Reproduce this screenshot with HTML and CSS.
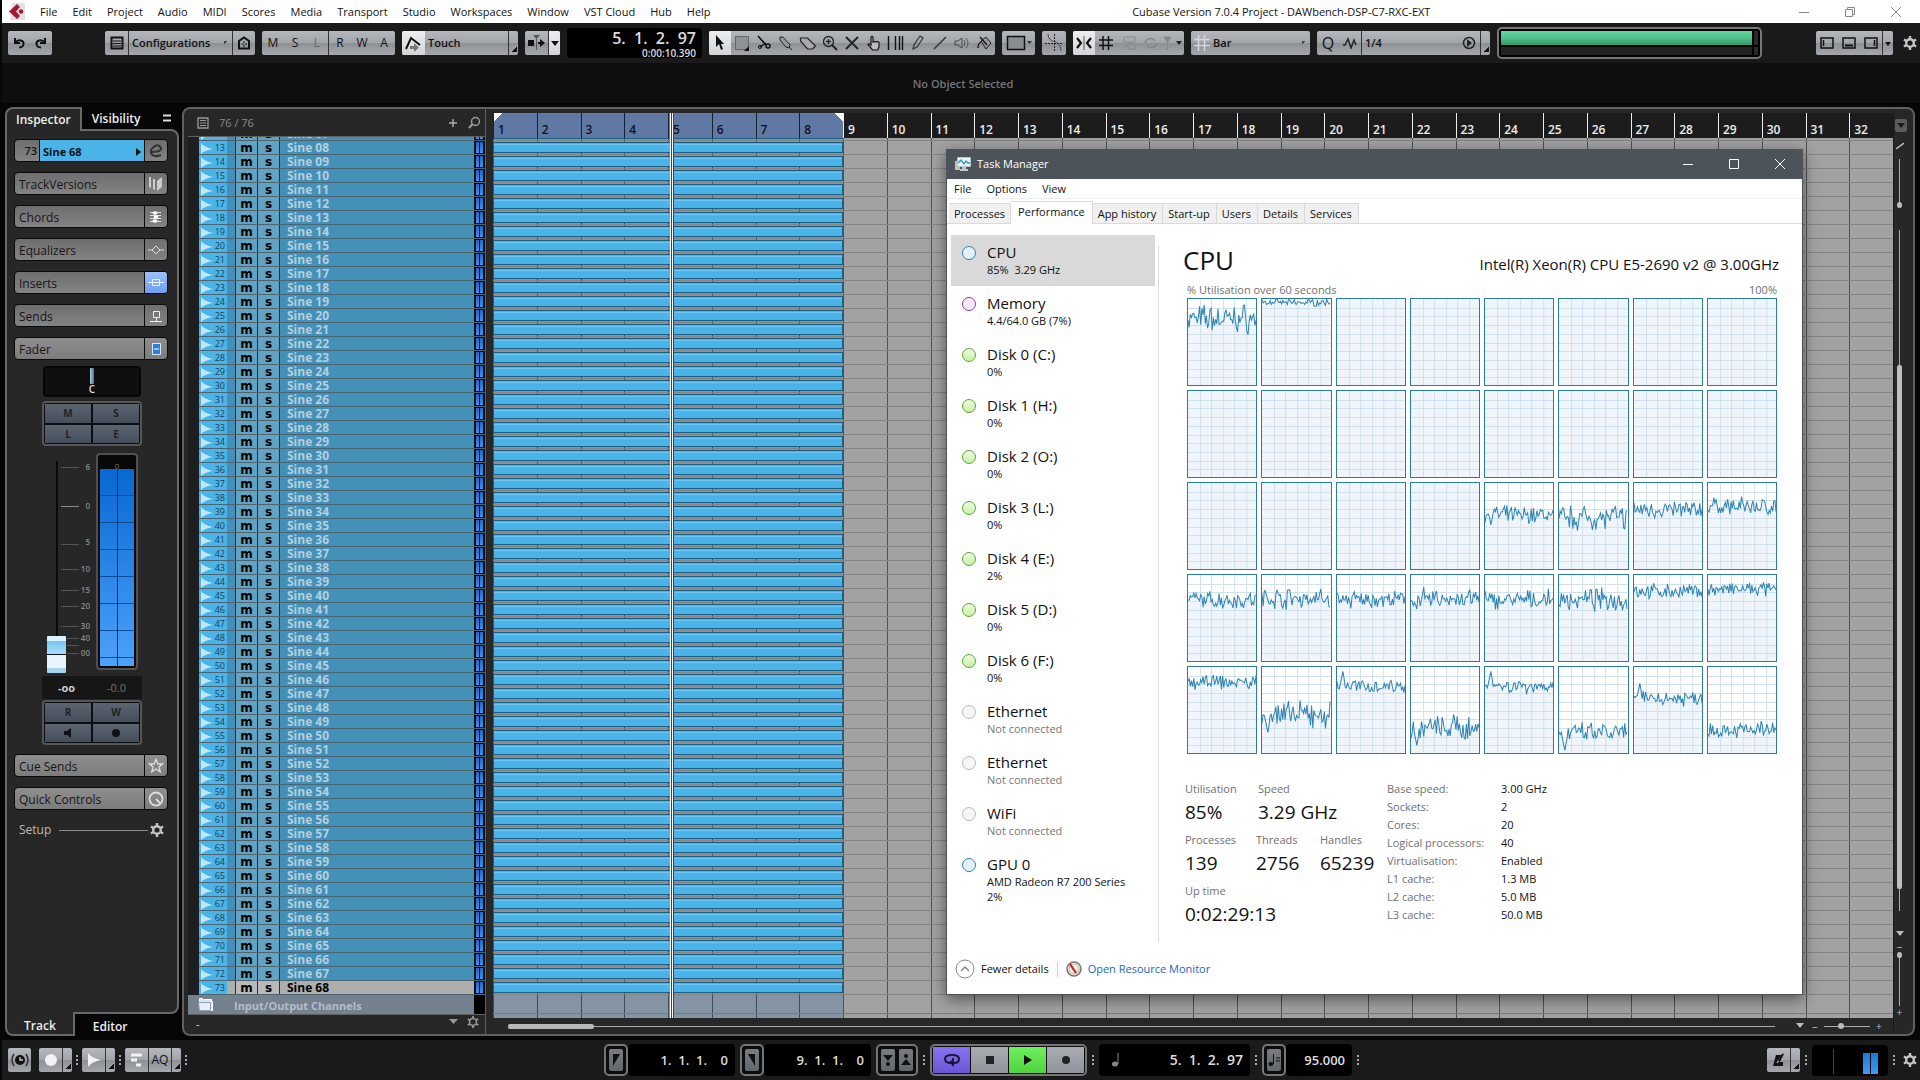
FILE: index.html
```html
<!DOCTYPE html>
<html lang="en">
<head>
  <meta charset="UTF-8" />
  <meta name="viewport" content="width=device-width, initial-scale=1.0"/>
  <title>Cubase Version 7.0.4 Project - DAWbench-DSP-C7-RXC-EXT</title>
  <link rel="stylesheet" href="styles.css">
</head>
<body>
  <header class="menubar">
    <svg class="logo" width="18" height="17" viewBox="0 0 18 17"><path d="M4 0h13v17H2z" fill="#e4dfe0"/><path d="M9 1 12 4 8 8.500l4 4.500-3 3L1 8.500z" fill="#9c1c34"/><circle cx="13" cy="8.500" r="2.200" fill="#9c1c34"/></svg>
    <nav class="menus">
      <button>File</button><button>Edit</button><button>Project</button><button>Audio</button><button>MIDI</button><button>Scores</button><button>Media</button><button>Transport</button><button>Studio</button><button>Workspaces</button><button>Window</button><button>VST Cloud</button><button>Hub</button><button>Help</button>
    </nav>
    <span class="app-title">Cubase Version 7.0.4 Project - DAWbench-DSP-C7-RXC-EXT</span>
    <div class="win-buttons">
      <button aria-label="Minimize"><svg width="12" height="12"><path d="M1 6.500h10" stroke="#888"/></svg></button>
      <button aria-label="Restore"><svg width="12" height="12"><path d="M1.500 3.500h7v7h-7zM3.500 3V1.500h7v7H9" fill="none" stroke="#888"/></svg></button>
      <button aria-label="Close"><svg width="12" height="12"><path d="M1 1l10 10M11 1 1 11" stroke="#888"/></svg></button>
    </div>
  </header>

  <div class="toolbar">
    <div class="group undo">
      <button aria-label="Undo"><svg width="14" height="14"><path d="M3 2v5h5M3.500 6.500C6 3 12 4 11.500 8c-.3 2.500-2 3.500-4.500 3.500" fill="none" stroke="#111" stroke-width="2"/></svg></button>
      <button aria-label="Redo"><svg width="14" height="14"><path d="M11 2v5H6M10.500 6.500C8 3 2 4 2.500 8c.3 2.500 2 3.500 4.500 3.500" fill="none" stroke="#111" stroke-width="2"/></svg></button>
    </div>
    <div class="group config">
      <button aria-label="Workspace list"><svg width="14" height="14"><path d="M1.500 1.500h11v11h-11z" fill="none" stroke="#111" stroke-width="2"/><path d="M3 5h8M3 7.500h8M3 10h8" stroke="#111"/></svg></button>
      <select class="wide" aria-label="Configurations"><option>Configurations</option></select>
      <button class="sep" aria-label="Home"><svg width="14" height="14"><path d="M2 12.500V5l5-3.500L12 5v7.500z" fill="none" stroke="#111" stroke-width="2"/><path d="M7 5v2M7 9v2M4.500 8h2M8 8h2" stroke="#111"/></svg></button>
    </div>
    <div class="group states">
      <button>M</button><button>S</button><button class="dim">L</button><button class="sep">R</button><button>W</button><button>A</button>
    </div>
    <div class="group touch">
      <button class="on" aria-label="Automation"><svg width="17" height="17"><path d="M1 14 6 3l9 7" fill="none" stroke="#111" stroke-width="2"/><path d="M5 11h4V8l5 4.500L9 17v-3H5z" fill="#777"/></svg></button>
      <select class="wide" aria-label="Automation mode"><option>Touch</option></select>
      <button class="corner" aria-label="Automation panel"></button>
    </div>
    <div class="group scroll-mode">
      <button aria-label="Auto-scroll"><svg width="18" height="16"><path d="M0 5h6v6H0z" fill="#111"/><path d="M8.500 1v14" stroke="#555"/><path d="M5 0h7L8.500 4z" fill="#555"/><path d="M10 7h2V4l5 4-5 4V9h-2z" fill="#111"/></svg></button>
      <button class="on sep" aria-label="Auto-scroll options"><svg width="8" height="6"><path d="M0 1h8L4 6z" fill="#111"/></svg></button>
    </div>
    <div class="time-display"><span class="bars">5.&nbsp; 1.&nbsp; 2.&nbsp; 97</span><span class="secs">0:00:10.390</span></div>
    <div class="group tools">
      <button class="on" aria-label="Object selection"><svg width="12" height="18"><path d="M2 1v12l3-3 2 6 2-1-2-5h3z" fill="#111"/></svg></button>
      <button aria-label="Range selection"><svg width="16" height="16"><path d="M1.500 1.500h13v13h-13z" fill="#8f9295" stroke="#666"/><path d="M15 11v5h-5z" fill="#111"/></svg></button>
      <button aria-label="Split"><svg width="16" height="16"><path d="M2 1l8 9M4 12l6-4" stroke="#111" stroke-width="1.500"/><circle cx="12" cy="11" r="2" fill="none" stroke="#111" stroke-width="1.500"/><circle cx="4" cy="12" r="1.500" fill="none" stroke="#111"/></svg></button>
      <button aria-label="Glue"><svg width="16" height="16"><path d="M2 2l3 0 7 8-1 3-3-1-6-7zM11 12l3 3" fill="#999" stroke="#222"/></svg></button>
      <button aria-label="Erase"><svg width="18" height="16"><path d="M1.500 3h7l8 8-3 3h-5l-7-8z" fill="#a9a9a9" stroke="#222" stroke-width="1.200"/></svg></button>
      <button aria-label="Zoom"><svg width="16" height="16"><circle cx="6.500" cy="6.500" r="5" fill="none" stroke="#222" stroke-width="1.300"/><path d="M4 6.500h5M6.500 4v5" stroke="#222" stroke-width="1.300"/><path d="M10 10l5 5" stroke="#222" stroke-width="2"/></svg></button>
      <button aria-label="Mute"><svg width="14" height="14"><path d="M1 1l12 12M13 1 1 13" stroke="#222" stroke-width="1.800"/></svg></button>
      <button aria-label="Comp"><svg width="16" height="16"><path d="M5 10V2q1-1.500 2 0v5q1.500-1 2 0 1.500-1 2 0 1.500-.8 2 .500V12l-1.500 3H6.500L2 9.500q1-1.500 3 .5z" fill="#bbb" stroke="#111" stroke-width="1.200"/></svg></button>
      <button aria-label="Time warp"><svg width="18" height="14"><path d="M1.500 0v14M8.500 0v14M12.500 0v14M15.500 0v14" stroke="#111" stroke-width="1.400"/></svg></button>
      <button aria-label="Draw"><svg width="12" height="16"><path d="M1 14l1-4 6-9 3 2-6 9z" fill="none" stroke="#333" stroke-width="1.200"/></svg></button>
      <button aria-label="Line"><svg width="14" height="14"><path d="M1 13 13 1" stroke="#333" stroke-width="1.500"/></svg></button>
      <button aria-label="Play"><svg width="16" height="14"><path d="M1 5h3l4-3v10L4 9H1z" fill="none" stroke="#444"/><path d="M10 4q2 3 0 6M12 2q4 5 0 10" fill="none" stroke="#555"/></svg></button>
      <button aria-label="Color"><svg width="16" height="16"><path d="M5 6l5-4 5 6-5 6z" fill="#999" stroke="#222"/><path d="M4 2l7 8M5 7c-2 1-3 3-3 6" fill="none" stroke="#111" stroke-width="1.300"/></svg></button>
    </div>
    <div class="group swatch"><button aria-label="Event colors"><svg width="26" height="16"><path d="M1.500 1.500h17v13h-17z" fill="#8a8d90" stroke="#111" stroke-width="1.500"/><path d="M21 6h5l-2.500 3z" fill="#333"/></svg></button></div>
    <div class="group xfade"><button aria-label="Snap to zero crossing"><svg width="18" height="18"><path d="M0 9.500h18M9.500 0v18" stroke="#222" stroke-dasharray="2 1"/><path d="M3 0c1 12 12 3 13 17" fill="none" stroke="#444"/></svg></button></div>
    <div class="group snap">
      <button class="on" aria-label="Snap"><svg width="16" height="14"><path d="M1 2l4 5-4 5M15 2l-4 5 4 5" fill="none" stroke="#111" stroke-width="2.200"/><path d="M8 0v14" stroke="#555"/></svg></button>
      <button aria-label="Grid"><svg width="14" height="14"><path d="M4 0v14M9.500 0v14M0 4h14M0 9.500h14" stroke="#111" stroke-width="1.500"/></svg></button>
      <button aria-label="Grid relative"><svg width="16" height="14"><path d="M3 1h11v5H3zM7 8h7v5H7zM3 10h4" fill="none" stroke="#85888b"/></svg></button>
      <button aria-label="Cycle snap"><svg width="16" height="14"><path d="M2 7q2-6 8-4l2 2M14 7q-2 6-8 4L4 9" fill="none" stroke="#85888b" stroke-width="1.500"/></svg></button>
      <button aria-label="Snap type"><svg width="20" height="14"><path d="M1 1h7L4.500 6zM4.500 5v9" fill="#85888b" stroke="#85888b"/><path d="M13 5h6l-3 4z" fill="#222"/></svg></button>
    </div>
    <div class="group grid-type">
      <svg width="16" height="16"><path d="M4.500 0v16M10.500 0v16M0 4.500h16M0 10.500h16" stroke="#d5d8da" stroke-width="1.500"/></svg>
      <select class="wide" aria-label="Grid type"><option>Bar</option></select>
    </div>
    <div class="group quantize">
      <button class="big">Q</button>
      <button aria-label="Iterative quantize"><svg width="14" height="12"><path d="M0 8h2l3-6 3 9 3-8 2 5" fill="none" stroke="#222" stroke-width="1.500"/></svg></button>
      <select class="wide plain sep" aria-label="Quantize preset"><option>1/4</option></select>
      <button aria-label="Apply quantize"><svg width="14" height="14"><circle cx="7" cy="7" r="5.500" fill="none" stroke="#222" stroke-width="1.500"/><path d="M5 3l5 4-5 4z" fill="#222"/></svg></button>
      <button class="corner" aria-label="Quantize panel"></button>
    </div>
    <div class="perf-meter"><div class="perf-row"><i class="load"></i><i class="peak"></i></div><div class="perf-row"><i class="disk"></i><i class="peak"></i></div></div>
    <div class="group zones">
      <button aria-label="Left zone"><svg width="14" height="14"><path d="M1 2h12v10H1z" fill="none" stroke="#111" stroke-width="1.500"/><path d="M3.500 4v6" stroke="#111" stroke-width="1.500"/></svg></button>
      <button aria-label="Lower zone"><svg width="14" height="14"><path d="M1 2h12v10H1z" fill="none" stroke="#111" stroke-width="1.500"/><path d="M3 9.500h8" stroke="#111" stroke-width="2"/></svg></button>
      <button aria-label="Right zone"><svg width="14" height="14"><path d="M1 2h12v10H1z" fill="none" stroke="#111" stroke-width="1.500"/><path d="M10.500 4v6" stroke="#111" stroke-width="1.500"/></svg></button>
      <button class="sep slim" aria-label="Zones menu"><svg width="6" height="5"><path d="M0 1h6L3 5z" fill="#111"/></svg></button>
    </div>
    <button class="icon-btn" aria-label="Toolbar setup"><svg class="gear" width="14" height="14" viewBox="0 0 14 14"><circle cx="7" cy="7" r="3.800" fill="none" stroke="#c4c4c4" stroke-width="2.400"/><path d="M7 0v3M7 11v3M.9 3.500l2.600 1.500M10.500 9l2.600 1.500M.9 10.500 3.500 9M10.500 5l2.600-1.500" stroke="#c4c4c4" stroke-width="2.400"/></svg></button>
  </div>

  <div class="info-line">No Object Selected</div>

  <main class="project">
    <aside class="inspector">
      <div class="tabs top"><button class="active">Inspector</button><button>Visibility</button><button class="tab-menu" aria-label="Tab menu"><svg width="8" height="8"><path d="M0 1.500h8M0 6.500h8" stroke="#ddd" stroke-width="2"/></svg></button></div>
      <div class="inspector-body">
        <div class="section track-name"><span class="num">73</span><button class="name">Sine 68 <i></i></button><button class="ico" aria-label="Edit channel"><svg width="16" height="16"><path d="M3 9q11 0 10-4-2-4-6-2-5 3-4 7 2 5 10 2" fill="none" stroke="#333" stroke-width="2"/></svg></button></div>
        <div class="section"><button class="name">TrackVersions</button><button class="ico" aria-label="Show TrackVersions"><svg width="16" height="16"><path d="M1 1h2v11l-2-1zM5 3h2v11l-2-1zM9 5l5-4v10l-5 4z" fill="#ccc"/></svg></button></div>
        <div class="section"><button class="name">Chords</button><button class="ico" aria-label="Show Chords"><svg width="14" height="14"><path d="M1 2.500h11M1 5.500h11M1 8.500h11M1 11.500h11" stroke="#ddd"/><ellipse cx="6" cy="3" rx="2.500" ry="1.800" fill="#fff"/><ellipse cx="7" cy="7" rx="2.500" ry="1.800" fill="#fff"/><ellipse cx="6" cy="11" rx="2.500" ry="1.800" fill="#fff"/></svg></button></div>
        <div class="section"><button class="name">Equalizers</button><button class="ico" aria-label="Show Equalizers"><svg width="16" height="12"><path d="M0 6h4l4-4 4 4h4M4 6l4 4 4-4" fill="none" stroke="#ddd"/></svg></button></div>
        <div class="section"><button class="name">Inserts</button><button class="ico lit" aria-label="Show Inserts"><svg width="16" height="12"><path d="M0 5.500h16M4.500 2.500h7v6h-7z" fill="none" stroke="#e8f0ff"/></svg></button></div>
        <div class="section"><button class="name">Sends</button><button class="ico" aria-label="Show Sends"><svg width="14" height="14"><path d="M4.500 2.500h6v6h-6zM7.500 9v3M1 12.500h12" fill="none" stroke="#eee"/></svg></button></div>
        <div class="section open"><button class="name">Fader</button><button class="ico" aria-label="Show Fader"><svg width="14" height="16"><path d="M3.500 2.500h8v11h-8z" fill="#2a7fe0" stroke="#dceaff"/><path d="M5 8h5" stroke="#fff"/></svg></button></div>
        <div class="pan"><i></i>C</div>
        <div class="pads"><button>M</button><button>S</button><button>L</button><button>E</button></div>
        <div class="fader-area">
          <input class="fader" type="range" min="0" max="100" value="0" aria-label="Volume">
          <svg class="scale" width="32" height="212"><g stroke="#555"><path d="M1 6.500h18M1 83.500h18M1 108.500h18M1 129.500h18M1 145.500h18M1 165.500h18M7 177.500h12M7 184.500h12M7 192.500h12"/><path d="M1 45.500h18" stroke="#888"/></g><g class="scale-text"><text x="30" y="9">6</text><text x="30" y="48">0</text><text x="30" y="84">5</text><text x="30" y="111">10</text><text x="30" y="132">15</text><text x="30" y="148">20</text><text x="30" y="168">30</text><text x="30" y="180">40</text><text x="30" y="195">00</text></g></svg>
          <div class="level"><span>0</span><div class="level-bars"></div></div>
        </div>
        <div class="readout"><b>-oo</b><span>-0.0</span></div>
        <div class="pads"><button>R</button><button>W</button><button aria-label="Monitor"><svg width="12" height="12"><path d="M2 4h3l4-3v10L5 8H2z" fill="#111"/></svg></button><button aria-label="Record enable"><svg width="12" height="12"><circle cx="6" cy="6" r="4" fill="#111"/></svg></button></div>
        <div class="section open spaced"><button class="name">Cue Sends</button><button class="ico" aria-label="Show Cue Sends"><svg width="16" height="16"><path d="M8 1.500l2 4.500h4.500l-3.500 3 1.300 5L8 11l-4.300 3L5 9 1.500 6H6z" fill="none" stroke="#ddd" stroke-width="1.300"/></svg></button></div>
        <div class="section open"><button class="name">Quick Controls</button><button class="ico" aria-label="Show Quick Controls"><svg width="16" height="16"><circle cx="8" cy="8" r="6.500" fill="none" stroke="#ddd" stroke-width="1.800"/><path d="M8 8l4 4" stroke="#ddd" stroke-width="1.800"/></svg></button></div>
        <div class="setup"><span>Setup</span><hr><svg class="gear" width="14" height="14" viewBox="0 0 14 14"><circle cx="7" cy="7" r="3.800" fill="none" stroke="#c4c4c4" stroke-width="2.400"/><path d="M7 0v3M7 11v3M.9 3.500l2.600 1.500M10.500 9l2.600 1.500M.9 10.500 3.500 9M10.500 5l2.600-1.500" stroke="#c4c4c4" stroke-width="2.400"/></svg></div>
      </div>
      <div class="tabs bottom"><button class="active">Track</button><button>Editor</button></div>
    </aside>

    <section class="workspace">
      <div class="track-pane">
        <div class="track-head">
          <svg width="12" height="12"><path d="M1 1h10v10H1z" fill="none" stroke="#999" stroke-width="1.300"/><path d="M3 3.500h6M3 6h6M3 8.500h6" stroke="#999"/></svg>
          <span>76 / 76</span>
          <button aria-label="Add track"><svg width="8" height="8"><path d="M4 0v8M0 4h8" stroke="#aaa" stroke-width="1.500"/></svg></button>
          <button aria-label="Find tracks"><svg width="14" height="14"><circle cx="8.500" cy="5.500" r="4" fill="none" stroke="#999" stroke-width="1.500"/><path d="M5.500 8 2 12" stroke="#999" stroke-width="2"/></svg></button>
        </div>
        <div class="track-list" id="trackList"></div>
        <div class="io-row"><span class="folder"><svg width="18" height="15"><path d="M2.500 13.500h13v-9h-1v-2h-8l-1-1h-3z" fill="#dfe6ef" stroke="#fff"/><path d="M1.500 5.500h12v8h-11z" fill="#e9eef6" stroke="#8fa0b4"/></svg></span><b>Input/Output Channels</b><i></i></div>
        <div class="track-foot"><span>-</span><svg width="30" height="14"><path d="M0 3h9l-4.500 5z" fill="#999"/><g transform="translate(18 0)"><circle cx="6" cy="6" r="3.500" fill="none" stroke="#999" stroke-width="1.500"/><path d="M6 0v2.500M6 9.500V12M.8 3l2.200 1.300M9 7.700 11.200 9M.8 9 3 7.700M9 4.300 11.200 3" stroke="#999" stroke-width="1.800"/></g></svg></div>
      </div>

      <div class="arrange">
        <div class="ruler" id="ruler"></div>
        <div class="lanes">
          <div class="bar-lines" id="barLines"></div>
          <div class="lane-rows" id="laneRows"></div>
          <div class="lane-io"></div>
        </div>
        <div class="playhead"></div>
        <div class="h-scroll"><div class="h-track"><i></i></div><svg width="10" height="6"><path d="M0 0h8L4 5z" fill="#bbb"/></svg><span>–</span><input class="h-zoom" type="range" min="0" max="100" value="36" aria-label="Horizontal zoom"><span>+</span></div>
      </div>

      <div class="v-strip">
        <button class="v-menu" aria-label="Ruler menu"><svg width="8" height="5"><path d="M0 0h8L4 5z" fill="#1a1a1a"/></svg></button>
        <svg width="8" height="8"><path d="M0 7 8 1" stroke="#bbb" stroke-width="1.500"/></svg>
        <div class="v-gain"><i></i></div>
        <div class="v-track"><i></i></div>
        <svg class="v-down" width="8" height="5"><path d="M0 0h8L4 5z" fill="#bbb"/></svg>
        <span>–</span>
        <div class="v-zoom"><i></i></div>
        <span>+</span>
      </div>
    </section>
  </main>

  <footer class="transport">
    <div class="left">
      <div class="group"><button class="w22" aria-label="Constrain delay"><svg width="18" height="16"><circle cx="9" cy="8" r="5" fill="#111"/><path d="M9 5v3h3" stroke="#ccc" fill="none" stroke-width="1.300"/><path d="M3 2q-4 6 0 12M15 2q4 6 0 12" fill="none" stroke="#333" stroke-width="1.500"/></svg></button></div>
      <div class="group"><button class="w22" aria-label="Record mode"><svg width="14" height="14"><circle cx="7" cy="7" r="6" fill="#f0f2f8"/></svg></button><button class="corner"  aria-label="Record options"></button></div><i class="dots"></i>
      <div class="group"><button class="w22" aria-label="Audio record mode"><svg width="14" height="14"><path d="M1 0q3 5 13 7Q4 9 1 14z" fill="#f0f2f8"/></svg></button><button class="corner" aria-label="Audio options"></button></div><i class="dots"></i>
      <div class="group"><button class="w22" aria-label="MIDI record mode"><svg width="14" height="14"><path d="M1 2h11M1 7h6M6 12h5" stroke="#f0f2f8" stroke-width="3"/></svg></button><button class="w22 sep aq">AQ</button><button class="corner" aria-label="MIDI options"></button></div><i class="dots"></i>
    </div>
    <div class="center">
      <div class="frame"><button class="mini" aria-label="Left locator"><svg width="10" height="16"><path d="M2 14V2h7z" fill="#111"/></svg></button></div>
      <div class="field w107">1.&nbsp; 1.&nbsp; 1. &nbsp;&nbsp; 0</div>
      <div class="frame"><button class="mini" aria-label="Right locator"><svg width="10" height="16"><path d="M8 14V2H1z" fill="#111"/></svg></button></div>
      <div class="field w107">9.&nbsp; 1.&nbsp; 1. &nbsp;&nbsp; 0</div>
      <div class="frame"><button class="mini" aria-label="Punch in"><svg width="10" height="16"><path d="M0 3h10L5 9z" fill="#111"/><circle cx="5" cy="12" r="2" fill="#111"/></svg></button><button class="mini" aria-label="Punch out"><svg width="10" height="16"><path d="M0 13h10L5 7z" fill="#111"/><circle cx="5" cy="4" r="2" fill="#111"/></svg></button></div>
      <i class="dots"></i>
      <div class="frame play">
        <button class="cycle" aria-label="Cycle"><svg width="18" height="14"><path d="M8 10q-6 0-6-4t7-4 7 4-5 4" fill="none" stroke="#1b1740" stroke-width="2"/><path d="M6 9l5-3v8z" fill="#1b1740"/><path d="M10 5v8" stroke="#1b1740" stroke-width="2"/></svg></button>
        <button aria-label="Stop"><svg width="10" height="10"><path d="M1 1h8v8H1z" fill="#222"/></svg></button>
        <button class="go" aria-label="Play"><svg width="10" height="12"><path d="M1 1l8 5-8 5z" fill="#111"/></svg></button>
        <button aria-label="Record"><svg width="10" height="10"><circle cx="5" cy="5" r="4" fill="#222"/></svg></button>
      </div>
      <i class="dots"></i>
      <div class="field w151"><svg width="10" height="16"><ellipse cx="4" cy="12" rx="3" ry="2.500" fill="#888"/><path d="M7 12V1" stroke="#888"/></svg><span>5.&nbsp; 1.&nbsp; 2.&nbsp; 97</span></div>
      <i class="dots"></i>
      <div class="frame"><button class="mini" aria-label="Tempo mode"><svg width="12" height="16"><ellipse cx="3" cy="12" rx="2.500" ry="2" fill="#111"/><path d="M5.500 12V2M8 6h4M8 9h4" stroke="#111"/></svg></button></div>
      <div class="field w66">95.000</div>
      <i class="dots"></i>
    </div>
    <div class="right">
      <div class="group"><button class="w22" aria-label="Metronome"><svg width="14" height="16"><path d="M1 14 4 3h5l-1 7h3v4z" fill="#111"/><path d="M5 11 12 1" stroke="#999" stroke-width="1.500"/><path d="M7 9 11 2" stroke="#111" stroke-width="2"/></svg></button><button class="corner" aria-label="Metronome setup"></button></div><i class="dots"></i>
      <div class="out-level"><i class="line"></i><i class="bar"></i><i class="bar"></i></div><i class="dots"></i>
      <button class="icon-btn" aria-label="Transport setup"><svg class="gear" width="14" height="14" viewBox="0 0 14 14"><circle cx="7" cy="7" r="3.800" fill="none" stroke="#c4c4c4" stroke-width="2.400"/><path d="M7 0v3M7 11v3M.9 3.500l2.600 1.500M10.500 9l2.600 1.500M.9 10.500 3.500 9M10.500 5l2.600-1.500" stroke="#c4c4c4" stroke-width="2.400"/></svg></button>
    </div>
  </footer>

  <div class="taskmgr">
    <div class="tm-title">
      <svg width="18" height="16"><path d="M1 5h5v9H1z" fill="#c9c2a8"/><path d="M3.500 1.500h13v9h-13z" fill="#e8f6fc" stroke="#b9c4c8"/><path d="M4 7l3-3 3 4 2-3 2 2h2" fill="none" stroke="#2b8fc0" stroke-width="1.300"/><path d="M8 11h4v2h2v2H6v-2h2z" fill="#c4c9cb"/></svg>
      <span>Task Manager</span>
      <button aria-label="Minimise"><svg width="12" height="12"><path d="M1 6.500h10" stroke="#fff"/></svg></button>
      <button aria-label="Maximise"><svg width="12" height="12"><path d="M1.500 1.500h9v9h-9z" fill="none" stroke="#fff"/></svg></button>
      <button aria-label="Close Task Manager"><svg width="12" height="12"><path d="M1 1l10 10M11 1 1 11" stroke="#fff"/></svg></button>
    </div>
    <div class="tm-menu"><button>File</button><button>Options</button><button>View</button></div>
    <div class="tm-tabs"><button>Processes</button><button class="active">Performance</button><button>App history</button><button>Start-up</button><button>Users</button><button>Details</button><button>Services</button></div>
    <div class="tm-content">
      <div class="tm-side">
        <button class="item selected"><i class="dot blue"></i><span class="t">CPU</span><span>85%&nbsp; 3.29 GHz</span></button>
        <button class="item"><i class="dot purple"></i><span class="t">Memory</span><span>4.4/64.0 GB (7%)</span></button>
        <button class="item"><i class="dot green"></i><span class="t">Disk 0 (C:)</span><span>0%</span></button>
        <button class="item"><i class="dot green"></i><span class="t">Disk 1 (H:)</span><span>0%</span></button>
        <button class="item"><i class="dot green"></i><span class="t">Disk 2 (O:)</span><span>0%</span></button>
        <button class="item"><i class="dot green"></i><span class="t">Disk 3 (L:)</span><span>0%</span></button>
        <button class="item"><i class="dot green"></i><span class="t">Disk 4 (E:)</span><span>2%</span></button>
        <button class="item"><i class="dot green"></i><span class="t">Disk 5 (D:)</span><span>0%</span></button>
        <button class="item"><i class="dot green"></i><span class="t">Disk 6 (F:)</span><span>0%</span></button>
        <button class="item off"><i class="dot"></i><span class="t">Ethernet</span><span>Not connected</span></button>
        <button class="item off"><i class="dot"></i><span class="t">Ethernet</span><span>Not connected</span></button>
        <button class="item off"><i class="dot"></i><span class="t">WiFi</span><span>Not connected</span></button>
        <button class="item"><i class="dot blue"></i><span class="t">GPU 0</span><span>AMD Radeon R7 200 Series<br>2%</span></button>
      </div>
      <div class="tm-detail">
        <div class="cpu-head"><h1>CPU</h1><span>Intel(R) Xeon(R) CPU E5-2690 v2 @ 3.00GHz</span></div>
        <div class="cpu-cap"><span>% Utilisation over 60 seconds</span><span>100%</span></div>
        <div class="cores" id="cores"></div>
        <div class="stats">
          <div class="stats-big">
            <div><span>Utilisation</span><b>85%</b></div><div class="span2"><span>Speed</span><b>3.29 GHz</b></div>
            <div><span>Processes</span><b>139</b></div><div><span>Threads</span><b>2756</b></div><div><span>Handles</span><b>65239</b></div>
            <div class="span3"><span>Up time</span><b>0:02:29:13</b></div>
          </div>
          <table class="stats-table">
            <tr><th>Base speed:</th><td>3.00 GHz</td></tr>
            <tr><th>Sockets:</th><td>2</td></tr>
            <tr><th>Cores:</th><td>20</td></tr>
            <tr><th>Logical processors:</th><td>40</td></tr>
            <tr><th>Virtualisation:</th><td>Enabled</td></tr>
            <tr><th>L1 cache:</th><td>1.3 MB</td></tr>
            <tr><th>L2 cache:</th><td>5.0 MB</td></tr>
            <tr><th>L3 cache:</th><td>50.0 MB</td></tr>
          </table>
        </div>
      </div>
    </div>
    <div class="tm-foot">
      <button><svg width="20" height="20"><circle cx="10" cy="10" r="9" fill="#fff" stroke="#888"/><path d="M6 12l4-4 4 4" fill="none" stroke="#888" stroke-width="1.500"/></svg>Fewer details</button>
      <i></i>
      <svg width="16" height="16"><circle cx="8" cy="8" r="7" fill="#f4efe6" stroke="#777" stroke-width="1.500"/><circle cx="8" cy="8" r="5" fill="none" stroke="#b9b2a4"/><path d="M4 3l6 9" stroke="#c22" stroke-width="2.200"/></svg>
      <a href="#">Open Resource Monitor</a>
    </div>
  </div>

  <script src="script.js"></script>
</body>
</html>
```
FILE: styles.css
```css
* {
  box-sizing: border-box;
}
body {
  margin: 0;
  height: 100vh;
  padding-left: 2px;
  display: flex;
  flex-direction: column;
  overflow: hidden;
  background: #060606;
  color: #ddd;
  font-family: "Open Sans", "Noto Sans", sans-serif;
  font-size: 11px;
  line-height: 16px;
}
button, select, input {
  font: inherit;
  color: inherit;
  margin: 0;
  padding: 0;
  border: 0;
  border-radius: 0;
  background: none;
}
button {
  display: flex;
  align-items: center;
  justify-content: center;
}
select {
  appearance: none;
}
svg {
  display: block;
  flex: none;
}

/* menu bar */
.menubar {
  display: flex;
  align-items: center;
  height: 23px;
  flex: none;
  padding: 0 18px 0 6px;
  background: #fff;
  color: #111;
}
.menus {
  display: flex;
  gap: 15px;
  margin-left: 14px;
}
.app-title {
  flex: 1;
  text-align: center;
  padding-left: 54px;
}
.win-buttons {
  display: flex;
  gap: 34px;
}

/* toolbar */
.toolbar {
  display: flex;
  align-items: center;
  gap: 7px;
  height: 40px;
  flex: none;
  padding: 0 0 0 6px;
  background: #1a1a1a;
}
.group {
  display: flex;
  align-items: center;
  height: 24px;
  border-radius: 2px;
  overflow: hidden;
  background: linear-gradient(#b4b8bc, #a2a6aa 48%, #8e9296 52%, #a4a7ab);
  color: #111;
}
.group button {
  flex: 1;
  align-self: stretch;
}
.group .on {
  background: linear-gradient(#eceef0, #d2d4d6);
}
.group .sep {
  border-left: 1px solid #333;
}
.group .corner {
  flex: none;
  width: 10px;
  border-left: 1px solid #333;
  background: linear-gradient(135deg, transparent 50%, #111 50%) no-repeat 2px 16px / 6px 5px;
}
.wide {
  flex: 1;
  align-self: stretch;
  min-width: 0;
  padding-left: 3px;
  font-weight: 600;
  background: linear-gradient(to bottom right, #444 50%, transparent 50%) no-repeat right 4px center / 4px 4px;
}
.undo {
  width: 44px;
  margin-right: 46px;
}
.config {
  width: 150px;
}
.config button, .touch .on {
  flex: none;
  width: 23px;
}
.config .wide {
  border-left: 1px solid #333;
}
.states {
  width: 133px;
  font-size: 12px;
}
.dim {
  color: #666;
}
.touch {
  width: 116px;
}
.touch .wide, .plain {
  background: none;
}
.scroll-mode {
  width: 35px;
}
.scroll-mode .sep {
  flex: none;
  width: 12px;
}
.time-display {
  width: 135px;
  height: 30px;
  padding-right: 6px;
  border-radius: 3px;
  background: #000;
  text-align: right;
  display: flex;
  flex-direction: column;
  font-weight: 600;
}
.bars {
  font-size: 16px;
  line-height: 20px;
}
.secs {
  font-size: 10px;
  line-height: 10px;
}
.tools {
  width: 286px;
}
.swatch {
  width: 33px;
}
.xfade {
  width: 24px;
}
.snap {
  width: 111px;
}
.grid-type {
  width: 119px;
  padding-left: 3px;
}
.quantize {
  width: 173px;
}
.quantize button:not(.corner) {
  flex: none;
  width: 22px;
}
.big {
  font-size: 16px;
}
.perf-meter {
  width: 265px;
  height: 32px;
  padding: 2px;
  margin-right: auto;
  border: 2px solid #777;
  border-radius: 5px;
  background: #000;
}
.perf-row {
  display: flex;
  gap: 2px;
  height: 14px;
  margin-bottom: 2px;
}
.perf-row:last-child {
  height: 8px;
}
.load {
  flex: 1;
  background: linear-gradient(#62d6a0, #4fc08c 50%, #34996b);
}
.disk {
  flex: 1;
  background: #222;
}
.peak {
  width: 4px;
  background: #2a2a2a;
}
.zones {
  width: 77px;
}
.zones .slim {
  flex: none;
  width: 11px;
}
.icon-btn {
  width: 20px;
  height: 20px;
}

.info-line {
  height: 40px;
  flex: none;
  background: #0e0e0e;
  color: #757575;
  text-align: center;
  line-height: 42px;
  font-weight: 600;
  padding-left: 4px;
}

/* project window */
.project {
  flex: 1;
  min-height: 0;
  display: flex;
  gap: 3px;
  padding: 4px 5px 4px 3px;
}
.inspector {
  width: 174px;
  flex: none;
  display: flex;
  flex-direction: column;
}
.tabs {
  display: flex;
  align-items: stretch;
  height: 22px;
  flex: none;
  color: #eee;
  font-weight: 600;
  font-size: 12px;
}
.tabs button {
  padding: 2px 10px 0;
}
.tabs .active {
  position: relative;
  z-index: 1;
  border: 2px solid #686868;
  background: #272727;
}
.tabs.top .active {
  border-bottom: 0;
  border-radius: 8px 0 0 0;
  margin-bottom: -2px;
  padding: 0 9px;
}
.tabs.bottom .active {
  border-top: 0;
  border-radius: 0 0 0 8px;
  margin-top: -2px;
  padding: 5px 17px 0;
}
.tabs.bottom button {
  padding: 3px 18px 0;
}
.tabs .tab-menu {
  margin-left: auto;
  padding: 0 8px;
}
.inspector-body {
  flex: 1;
  border: 2px solid #686868;
  border-radius: 0 8px 8px 0;
  background: #272727;
  padding: 8px 7px;
}
.section {
  display: flex;
  width: 154px;
  height: 23px;
  margin-bottom: 10px;
  border: 1px solid #0a0a0a;
  border-radius: 4px;
  background: linear-gradient(#6e6e6e, #838383);
  color: #161616;
  overflow: hidden;
}
.section.open {
  background: linear-gradient(#8e8e8e, #7c7c7c);
}
.section .name {
  flex: 1;
  justify-content: flex-start;
  padding: 2px 0 0 4px;
  font-size: 12px;
}
.section .ico {
  width: 23px;
  border-left: 1px solid #0a0a0a;
}
.section .lit {
  background: linear-gradient(#9cc0fa, #6b9ff0);
}
.num {
  width: 24px;
  padding-right: 2px;
  text-align: right;
  line-height: 21px;
  font-weight: 600;
}
.section.track-name .name {
  justify-content: space-between;
  padding: 2px 3px 0 3px;
  background: #4ab4e8;
  border-left: 1px solid #0a0a0a;
  color: #08131a;
  font-size: 11px;
  font-weight: 700;
}
.track-name i {
  border: 4px solid transparent;
  border-left: 5px solid #111;
  border-right: 0;
}
.pan {
  width: 98px;
  height: 31px;
  margin: -4px auto 4px;
  border: 2px solid #060606;
  border-radius: 4px;
  background: #0f0f0f;
  text-align: center;
  font-size: 10px;
  font-weight: 600;
  line-height: 10px;
}
.pan i {
  display: block;
  width: 4px;
  height: 16px;
  margin: 0 auto;
  border-radius: 1px;
  background: linear-gradient(90deg, #9fd0e0, #4c7484);
}
.pads {
  display: grid;
  grid-template-columns: 1fr 1fr;
  grid-template-rows: 1fr 1fr;
  gap: 2px;
  width: 100px;
  height: 45px;
  margin: 0 auto;
  padding: 1px;
  border: 2px solid #575757;
  border-radius: 4px;
  background: #0b0f14;
}
.pads button {
  background: linear-gradient(#5c6470, #454e5b);
  color: #20242a;
  font-size: 10px;
  font-weight: 700;
}
.fader-area {
  display: flex;
  height: 218px;
  margin: 7px 0 5px 32px;
}
.fader {
  position: relative;
  z-index: 1;
  appearance: none;
  writing-mode: vertical-lr;
  direction: rtl;
  width: 21px;
  height: 212px;
  margin-top: 8px;
  background: linear-gradient(#0a0a0a, #0a0a0a) no-repeat center / 2px 100%;
}
.fader::-webkit-slider-thumb {
  appearance: none;
  width: 19px;
  height: 37px;
  border-radius: 1px;
  background: linear-gradient(#dff2ff 0, #dff2ff 5px, #76c4f4 5px, #a9dcfa 18px, #111 18px, #111 19px, #e6f5ff 19px, #e6f5ff 32px, #a6d4ee 32px);
}
.scale {
  margin: 8px 0 0 -7px;
}
.scale-text {
  fill: #8a8a8a;
  stroke: none;
  text-anchor: end;
  font-size: 8px;
  font-weight: 600;
}
.level {
  width: 42px;
  height: 217px;
  margin-left: 4px;
  padding: 2px;
  border: 2px solid #505050;
  border-radius: 4px;
  background: #080808;
}
.level span {
  display: block;
  height: 12px;
  text-align: center;
  font-size: 8px;
  line-height: 18px;
  color: #777;
}
.level-bars {
  height: 197px;
  background:
    linear-gradient(#08305c, #08305c) no-repeat center / 1px 100%,
    repeating-linear-gradient(transparent 0 26px, #0b4c96 26px 27px),
    linear-gradient(#0668d2, #4ba2fb);
}
.readout {
  display: flex;
  justify-content: space-around;
  width: 100px;
  height: 23px;
  margin: 0 auto 1px;
  background: #161616;
  line-height: 23px;
  color: #707070;
}
.readout b {
  color: #ccc;
}
.spaced {
  margin-top: 9px;
}
.setup {
  display: flex;
  align-items: center;
  gap: 8px;
  padding: 2px 6px 0 5px;
  color: #bbb;
  font-size: 12px;
}
.setup hr {
  flex: 1;
  margin: 0 -6px 0 0;
  border: 0;
  border-top: 1px solid #888;
}

.workspace {
  flex: 1;
  min-width: 0;
  display: flex;
  border: 2px solid #606060;
  border-radius: 8px;
  background: #272727;
  overflow: hidden;
}
.track-pane {
  width: 302px;
  flex: none;
  display: flex;
  flex-direction: column;
  border-right: 1px solid #606060;
  padding-left: 4px;
}
.track-head {
  display: flex;
  align-items: center;
  gap: 10px;
  height: 28px;
  flex: none;
  padding: 0 4px 0 9px;
  border-bottom: 1px solid #606060;
  color: #8a8a8a;
}
.track-head span {
  margin-right: auto;
}
.track-list {
  flex: 1;
  min-height: 0;
  display: flex;
  flex-direction: column;
  justify-content: flex-end;
  overflow: hidden;
  background: #1c1e20;
}
.track {
  display: flex;
  flex: none;
  height: 14px;
  margin-left: 11px;
  line-height: 14px;
  border-bottom: 1px solid #4b6470;
  background: #4391b8;
  color: #b3cfdf;
  font-weight: 700;
  font-size: 12px;
}
.track .idx {
  width: 28px;
  display: flex;
  align-items: center;
  justify-content: space-between;
  padding: 0 2px;
  margin-right: 8px;
  background: #4ab4e8;
  color: #15435c;
  font-weight: 400;
  font-size: 9px;
}
.track button {
  width: 22px;
  border-left: 1px solid #1c3440;
  background: #62a2c2;
  color: #000;
  font-family: "DejaVu Sans", sans-serif;
  font-weight: 700;
  font-size: 12px;
  line-height: 10px;
}
.track .title {
  flex: 1;
  border-left: 1px solid #1c3440;
  padding-left: 7px;
}
.track .sig {
  width: 11px;
  padding: 1px 2px;
  background: #0a0d14;
  display: flex;
  gap: 1px;
}
.track .sig i {
  flex: 1;
  background: linear-gradient(#1d66c4, #3f92ee);
}
.track.selected {
  background: #aeaeae;
  color: #000;
}
.track.selected button {
  background: #b9b9b9;
}
.io-row {
  display: flex;
  align-items: center;
  height: 19px;
  flex: none;
  background: #74828f;
  color: #b4bec8;
}
.io-row .folder {
  width: 28px;
  padding-left: 9px;
}
.io-row b {
  margin-left: 18px;
  padding-top: 2px;
  font-weight: 700;
}
.io-row i {
  margin-left: auto;
  width: 11px;
  height: 19px;
  background: #000;
}
.track-foot {
  display: flex;
  justify-content: space-between;
  align-items: flex-start;
  height: 20px;
  flex: none;
  padding: 1px 6px 0 8px;
  border-top: 1px solid #606060;
}

/* arrangement */
.arrange {
  position: relative;
  flex: 1;
  min-width: 0;
  margin-left: 7px;
  display: flex;
  flex-direction: column;
}
.ruler {
  display: grid;
  grid-template-columns: repeat(32, 1fr);
  height: 25px;
  margin-top: 4px;
  flex: none;
  background: #1c1c1c;
  font-weight: 600;
  font-size: 12px;
  color: #eee;
}
.ruler span {
  border-left: 1px solid #eee;
  padding: 9px 0 0 4px;
}
.ruler .loop {
  background: #6079a4;
  border-left-color: #16202e;
  color: #0d131c;
}
.ruler .first {
  background: linear-gradient(135deg, #fff 6px, #6079a4 6px);
}
.ruler .last {
  background: linear-gradient(225deg, #fff 6px, #6079a4 6px);
}
.lanes {
  position: relative;
  flex: 1;
  min-height: 0;
  display: flex;
  flex-direction: column;
  background: #a2a2a2;
}
.bar-lines {
  position: absolute;
  inset: 0;
  display: grid;
  grid-template-columns: repeat(32, 1fr);
}
.bar-lines i {
  border-left: 1px solid #505050;
}
.bar-lines .loop {
  background: #8594a2;
  border-left-color: #3f4a55;
}
.lane-rows {
  position: relative;
  flex: 1;
  min-height: 0;
  display: flex;
  flex-direction: column;
  justify-content: flex-end;
  overflow: hidden;
}
.lane {
  height: 14px;
  flex: none;
  padding-top: 1px;
  border-bottom: 1px solid #858585;
}
.clip {
  width: 25%;
  height: 11px;
  border: 1px solid #1d5f84;
  background: linear-gradient(#4ab4e8 1px, #6cc6f2 1px, #6cc6f2 2px, #4ab4e8 2px);
}
.lane-io {
  position: relative;
  height: 19px;
  margin-bottom: 4px;
  border-bottom: 1px solid #757b80;
}
.playhead {
  position: absolute;
  left: 177px;
  top: 4px;
  bottom: 16px;
  width: 4px;
  background: linear-gradient(90deg, #fff 1px, #444 1px, #444 2px, #fff 2px, #fff 3px, #444 3px);
}
.h-scroll {
  display: flex;
  align-items: center;
  gap: 6px;
  height: 16px;
  flex: none;
  padding: 0 11px 0 15px;
  color: #bbb;
}
.h-track {
  flex: 1;
  height: 1px;
  margin-right: 15px;
  background: #aaa;
}
.h-track i {
  display: block;
  width: 86px;
  height: 5px;
  margin-top: -2px;
  border-radius: 2px;
  background: #b8b8b8;
}
.h-zoom {
  appearance: none;
  width: 46px;
  height: 8px;
  background: linear-gradient(#aaa, #aaa) no-repeat center / 100% 1px;
}
.h-zoom::-webkit-slider-thumb {
  appearance: none;
  width: 6px;
  height: 6px;
  border-radius: 3px;
  background: #bbb;
}
.v-strip {
  width: 20px;
  flex: none;
  display: flex;
  flex-direction: column;
  align-items: center;
  padding: 10px 8px 16px 0;
  border-left: 1px solid #1a1a1a;
  color: #bbb;
  line-height: 12px;
}
.v-menu {
  width: 12px;
  height: 13px;
  flex: none;
  align-self: flex-end;
  margin: 0 -2px 10px 0;
  border-radius: 2px;
  background: #5c5c60;
}
.v-gain {
  width: 1px;
  height: 49px;
  flex: none;
  margin: 9px 0 22px;
  background: #aaa;
  display: flex;
  align-items: flex-end;
}
.v-gain i, .v-zoom i {
  flex: none;
  width: 5px;
  height: 6px;
  margin-left: -2px;
  border-radius: 3px;
  background: #bbb;
}
.v-track {
  flex: 1;
  width: 1px;
  background: #aaa;
  margin-bottom: 20px;
}
.v-track i {
  display: block;
  width: 5px;
  height: 77%;
  margin: 135px 0 0 -2px;
  border-radius: 2px;
  background: #c0c0c0;
}
.v-down {
  margin-bottom: 4px;
}
.v-zoom {
  width: 1px;
  height: 54px;
  flex: none;
  background: #aaa;
}
.v-zoom i {
  display: block;
}

/* transport */
.transport {
  display: flex;
  align-items: center;
  height: 40px;
  flex: none;
  padding: 0 0 0 6px;
  background: #1a1a1a;
}
.left, .center, .right {
  display: flex;
  align-items: center;
  gap: 5px;
}
.left {
  width: 596px;
  gap: 4px;
}
.left .group:first-child {
  margin-right: 4px;
}
.right {
  margin-left: auto;
}
.group .w22 {
  flex: none;
  width: 23px;
}
.aq {
  font-size: 12px;
}
.dots {
  width: 2px;
  height: 10px;
  background: repeating-linear-gradient(#aaa 0 2px, transparent 2px 4px);
}
.frame {
  display: flex;
  gap: 4px;
  height: 32px;
  padding: 3px;
  border: 2px solid #757575;
  border-radius: 5px;
  background: #0c0c0c;
}
.mini {
  width: 14px;
  border-radius: 2px;
  background: linear-gradient(#787d82, #62676c);
}
.field {
  display: flex;
  align-items: center;
  justify-content: flex-end;
  height: 32px;
  padding-right: 7px;
  border-radius: 4px;
  background: #000;
  font-size: 13px;
  font-weight: 600;
}
.frame + .field {
  margin-left: -5px;
}
.field svg {
  margin: 0 auto 0 12px;
}
.w107 {
  width: 107px;
}
.w151 {
  width: 151px;
  font-size: 14px;
}
.w66 {
  width: 66px;
}
.play {
  gap: 1px;
  padding: 1px;
}
.play button {
  width: 37px;
  background: linear-gradient(#a9adb3, #90949a);
}
.play .cycle {
  background: linear-gradient(#8472ee, #6a58d6);
}
.play .go {
  background: linear-gradient(#6ef05e, #4fd33e);
}
.out-level {
  display: flex;
  align-items: flex-end;
  gap: 1px;
  width: 76px;
  height: 31px;
  padding: 3px 10px 2px 21px;
  border-radius: 4px;
  background: #000;
}
.out-level .line {
  width: 1px;
  height: 25px;
  margin-right: auto;
  background: #444;
}
.out-level .bar {
  width: 7px;
  height: 21px;
  background: linear-gradient(#1c78d8, #409af4);
}

/* task manager window */
.taskmgr {
  position: absolute;
  left: 946px;
  top: 149px;
  width: 857px;
  display: flex;
  flex-direction: column;
  border: 1px solid #4c5459;
  border-top: 0;
  background: #fff;
  color: #111;
  box-shadow: 0 4px 14px rgba(0, 0, 0, 0.5);
}
.tm-title {
  display: flex;
  align-items: center;
  gap: 34px;
  height: 30px;
  padding: 0 16px 0 7px;
  background: #4c5459;
  color: #fff;
}
.tm-title span {
  margin: 0 auto 0 -29px;
}
.tm-menu {
  display: flex;
  gap: 15px;
  height: 20px;
  padding-left: 7px;
  border-bottom: 1px solid #eee;
}
.tm-tabs {
  display: flex;
  align-items: flex-end;
  height: 25px;
  padding-left: 2px;
  border-bottom: 1px solid #d9d9d9;
}
.tm-tabs button {
  height: 20px;
  padding: 0 6px 0 5px;
  border: 1px solid #d9d9d9;
  border-width: 1px 1px 0 0;
  background: #f0f0f0;
}
.tm-tabs button:first-child {
  padding: 0 5px;
}
.tm-tabs .active {
  height: 23px;
  padding: 0 7px 2px;
  margin-bottom: -1px;
  background: #fff;
}
.tm-content {
  display: flex;
  padding: 11px 0 0 4px;
  height: 720px;
}
.tm-side {
  width: 204px;
}
.item {
  display: grid;
  grid-template-columns: 36px 1fr;
  width: 100%;
  min-height: 51px;
  padding: 7px 0;
  align-content: start;
  justify-content: start;
  text-align: left;
}
.item span {
  grid-column: 2;
  line-height: 15px;
}
.item .t {
  font-size: 15px;
  line-height: 20px;
}
.item.off span:last-child {
  color: #777;
}
.selected.item {
  background: #d9d9d9;
}
.dot {
  width: 14px;
  height: 14px;
  margin: 2px 0 0 11px;
  border: 1px solid #bbb;
  border-radius: 50%;
  background: #f6f6f6;
}
.dot.blue {
  border-color: #2f84b8;
  background: #e4f1f9;
}
.dot.purple {
  border-color: #9a35ae;
  background: #f8e9fb;
}
.dot.green {
  border-color: #5da632;
  background: linear-gradient(#eefadf, #c8f0a8);
}
.tm-detail {
  flex: 1;
  min-width: 0;
  margin-top: 11px;
  height: 696px;
  padding: 0 23px 0 26px;
  margin-left: 3px;
  border-left: 1px solid #ddd;
}
.cpu-head {
  display: flex;
  justify-content: space-between;
  align-items: baseline;
  height: 36px;
}
.cpu-head h1 {
  margin: 0 0 0 -2px;
  font-size: 26px;
  line-height: 28px;
  font-weight: 400;
}
.cpu-head span {
  font-size: 15px;
}
.cpu-cap {
  display: flex;
  justify-content: space-between;
  color: #707070;
  padding: 0 2px;
}
.cores {
  display: grid;
  grid-template-columns: repeat(8, 1fr);
  gap: 4px;
  padding: 0 2px;
}
.core {
  display: block;
  width: 100%;
  height: 88px;
  border: 1px solid #2a7ba8;
  background: #fff;
}
.stats {
  display: flex;
  margin-top: 26px;
}
.stats-big {
  display: grid;
  grid-template-columns: 71px 64px 67px;
  align-content: start;
}
.stats-big div {
  height: 51px;
  display: flex;
  flex-direction: column;
}
.stats-big .span2 {
  grid-column: span 2;
  padding-left: 2px;
}
.stats-big .span3 {
  grid-column: span 3;
}
.stats-big span {
  color: #707070;
  line-height: 18px;
}
.stats-big b {
  font-size: 19px;
  line-height: 28px;
  font-weight: 400;
}
.stats-table {
  border-collapse: collapse;
  height: 144px;
}
.stats-table th {
  width: 114px;
  padding: 0;
  text-align: left;
  font-weight: 400;
  color: #707070;
  line-height: 18px;
}
.stats-table td {
  padding: 0;
  line-height: 18px;
}
.tm-foot {
  display: flex;
  align-items: center;
  gap: 8px;
  height: 50px;
  padding-left: 8px;
}
.tm-foot button {
  gap: 6px;
}
.tm-foot i {
  width: 1px;
  height: 15px;
  background: #ccc;
}
.tm-foot a {
  margin-left: -2px;
  color: #1b66bd;
  text-decoration: none;
}
```
FILE: script.js
```js
// track list and clip lanes
const trackList = document.getElementById("trackList");
const laneRows = document.getElementById("laneRows");
for (let n = 12; n <= 73; n++) {
  const name = "Sine " + String(n - 5).padStart(2, "0");
  trackList.innerHTML += `<div class="track${n === 73 ? " selected" : ""}">
    <span class="idx"><svg width="12" height="12"><path d="M0 1q3 4 12 6Q4 8 0 12z" fill="#c4e6f8"/></svg>${n}</span>
    <button>m</button><button>s</button><span class="title">${name}</span>
    <span class="sig"><i></i><i></i></span></div>`;
  laneRows.innerHTML += `<div class="lane"><div class="clip"></div></div>`;
}

// ruler and bar lines, bars 1-8 are inside the locators
const ruler = document.getElementById("ruler");
const barLines = document.getElementById("barLines");
for (let b = 1; b <= 32; b++) {
  const cls = (b < 9 ? "loop" : "") + (b === 1 ? " first" : "") + (b === 8 ? " last" : "");
  ruler.innerHTML += `<span class="${cls}">${b}</span>`;
  barLines.innerHTML += `<i class="${b < 9 ? "loop" : ""}"></i>`;
}

// core graphs: [average load, swing], null is a fully loaded core
const loads = [
  [77, 20], [96, 5], null, null, null, null, null, null,
  null, null, null, null, null, null, null, null,
  null, null, null, null, [63, 12], [60, 17], [69, 12], [73, 12],
  [71, 12], [73, 14], [71, 12], [72, 15], [71, 13], [71, 15], [81, 10], [83, 10],
  [82, 10], [44, 19], [78, 9], [29, 18], [78, 11], [23, 14], [64, 11], [27, 12]
];

let seed = 7;
function rand() {
  seed = (seed * 16807) % 2147483647;
  return seed / 2147483647;
}

const cores = document.getElementById("cores");
loads.forEach((load, i) => {
  let grid = "";
  for (let k = 1; k < 6; k++) grid += `M${Math.round(k * 11.6)}.5 0V86`;
  for (let k = 1; k < 10; k++) grid += `M0 ${Math.round(k * 8.7)}.5H68`;
  const pts = [];
  if (load) {
    let k = 0;
    for (let x = 0; x <= 68; x += 1.15) {
      let v = load[0] + (rand() + rand() - 1) * load[1];
      // start-up dip or spike on the last row
      if ((i === 33 || i === 35 || i === 37) && k > 2 && k < 7) v = load[0] - 20 + Math.abs(k - 5) * 7;
      if ((i === 34 || i === 36 || i === 38) && k > 2 && k < 7) v = load[0] + 17 - Math.abs(k - 5) * 7;
      pts.push(`${x.toFixed(1)},${(86 - Math.min(v, 100) * 0.86).toFixed(1)}`);
      k++;
    }
  }
  const area = load ? `0,86 ${pts.join(" ")} 69,86` : "0,0 69,0 69,86 0,86";
  cores.innerHTML += `<svg class="core" viewBox="0 0 68 86" preserveAspectRatio="none">
    <polygon points="${area}" fill="#eff5fa"/>
    <path d="${grid}" stroke="#cfe1ec" fill="none"/>
    <polyline points="${pts.join(" ")}" fill="none" stroke="#2b83b5"/></svg>`;
});
```
